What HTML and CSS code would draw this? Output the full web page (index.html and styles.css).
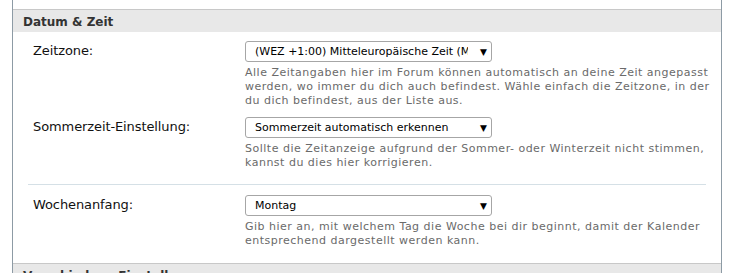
FILE: index.html
```html
<!DOCTYPE html>
<html lang="de">
<head>
  <meta charset="UTF-8">
  <title>Datum &amp; Zeit</title>
  <link rel="stylesheet" href="styles.css">
</head>
<body>
  <div class="panel">
    <div class="spacer"></div>
    <h3 class="section-head">Datum &amp; Zeit</h3>
    <div class="group">
      <div class="row">
        <label class="row-label" for="tz">Zeitzone:</label>
        <div class="row-field">
          <div class="select" id="tz"><span>(WEZ +1:00) Mitteleuropäische Zeit (MEZ)</span><i>▼</i></div>
          <p class="hint">Alle Zeitangaben hier im Forum können automatisch an deine Zeit angepasst werden, wo immer du dich auch befindest. Wähle einfach die Zeitzone, in der du dich befindest, aus der Liste aus.</p>
        </div>
      </div>
      <div class="row">
        <label class="row-label" for="dst">Sommerzeit-Einstellung:</label>
        <div class="row-field">
          <div class="select" id="dst"><span>Sommerzeit automatisch erkennen</span><i>▼</i></div>
          <p class="hint">Sollte die Zeitanzeige aufgrund der Sommer- oder Winterzeit nicht stimmen, kannst du dies hier korrigieren.</p>
        </div>
      </div>
    </div>
    <div class="group">
      <div class="row">
        <label class="row-label" for="week">Wochenanfang:</label>
        <div class="row-field">
          <div class="select" id="week"><span>Montag</span><i>▼</i></div>
          <p class="hint">Gib hier an, mit welchem Tag die Woche bei dir beginnt, damit der Kalender entsprechend dargestellt werden kann.</p>
        </div>
      </div>
    </div>
    <h3 class="section-head">Verschiedene Einstellungen</h3>
  </div>
</body>
</html>
```
FILE: styles.css
```css
body {
  margin: 0;
  background: #fff;
  font-family: "DejaVu Sans", Verdana, sans-serif;
  overflow: hidden;
}

.panel {
  margin: 0 10px 0 12px;
  border-left: 1px solid #8d9ba5;
  border-right: 1px solid #8d9ba5;
  height: 273px;
  overflow: hidden;
}

.spacer {
  height: 9px;
}

.section-head {
  margin: 0;
  background: #e8e8e8;
  border-top: 1px solid #c8c8c8;
  height: 20px;
  padding: 2px 0 0 10px;
  line-height: 20px;
  font-size: 12px;
  font-weight: bold;
  color: #333;
}

.group {
  margin: 0 15px;
  padding: 9px 0 14px;
}

.group + .group {
  border-top: 1px solid #d5e0e6;
  padding-top: 10px;
  padding-bottom: 15px;
}

.row {
  display: grid;
  grid-template-columns: 212px 1fr;
  padding-left: 5px;
}

.row + .row {
  margin-top: 9px;
}

.row-label {
  font-size: 13px;
  color: #111;
  padding-top: 2px;
  letter-spacing: -0.1px;
}

.select {
  height: 19px;
  width: 236px;
  border: 1px solid #a6a6a6;
  border-radius: 3px;
  display: flex;
  align-items: center;
  font-size: 11px;
  color: #000;
  padding-left: 9px;
}

.select span {
  flex: 1;
  white-space: nowrap;
  overflow: hidden;
  margin-right: 8px;
}

.select i {
  font-style: normal;
  font-size: 9px;
  width: 15px;
  text-align: center;
}

.hint {
  margin: 4px 0 0;
  font-size: 11px;
  line-height: 14px;
  letter-spacing: 0.5px;
  color: #6a6a6a;
  width: 468px;
}
```
